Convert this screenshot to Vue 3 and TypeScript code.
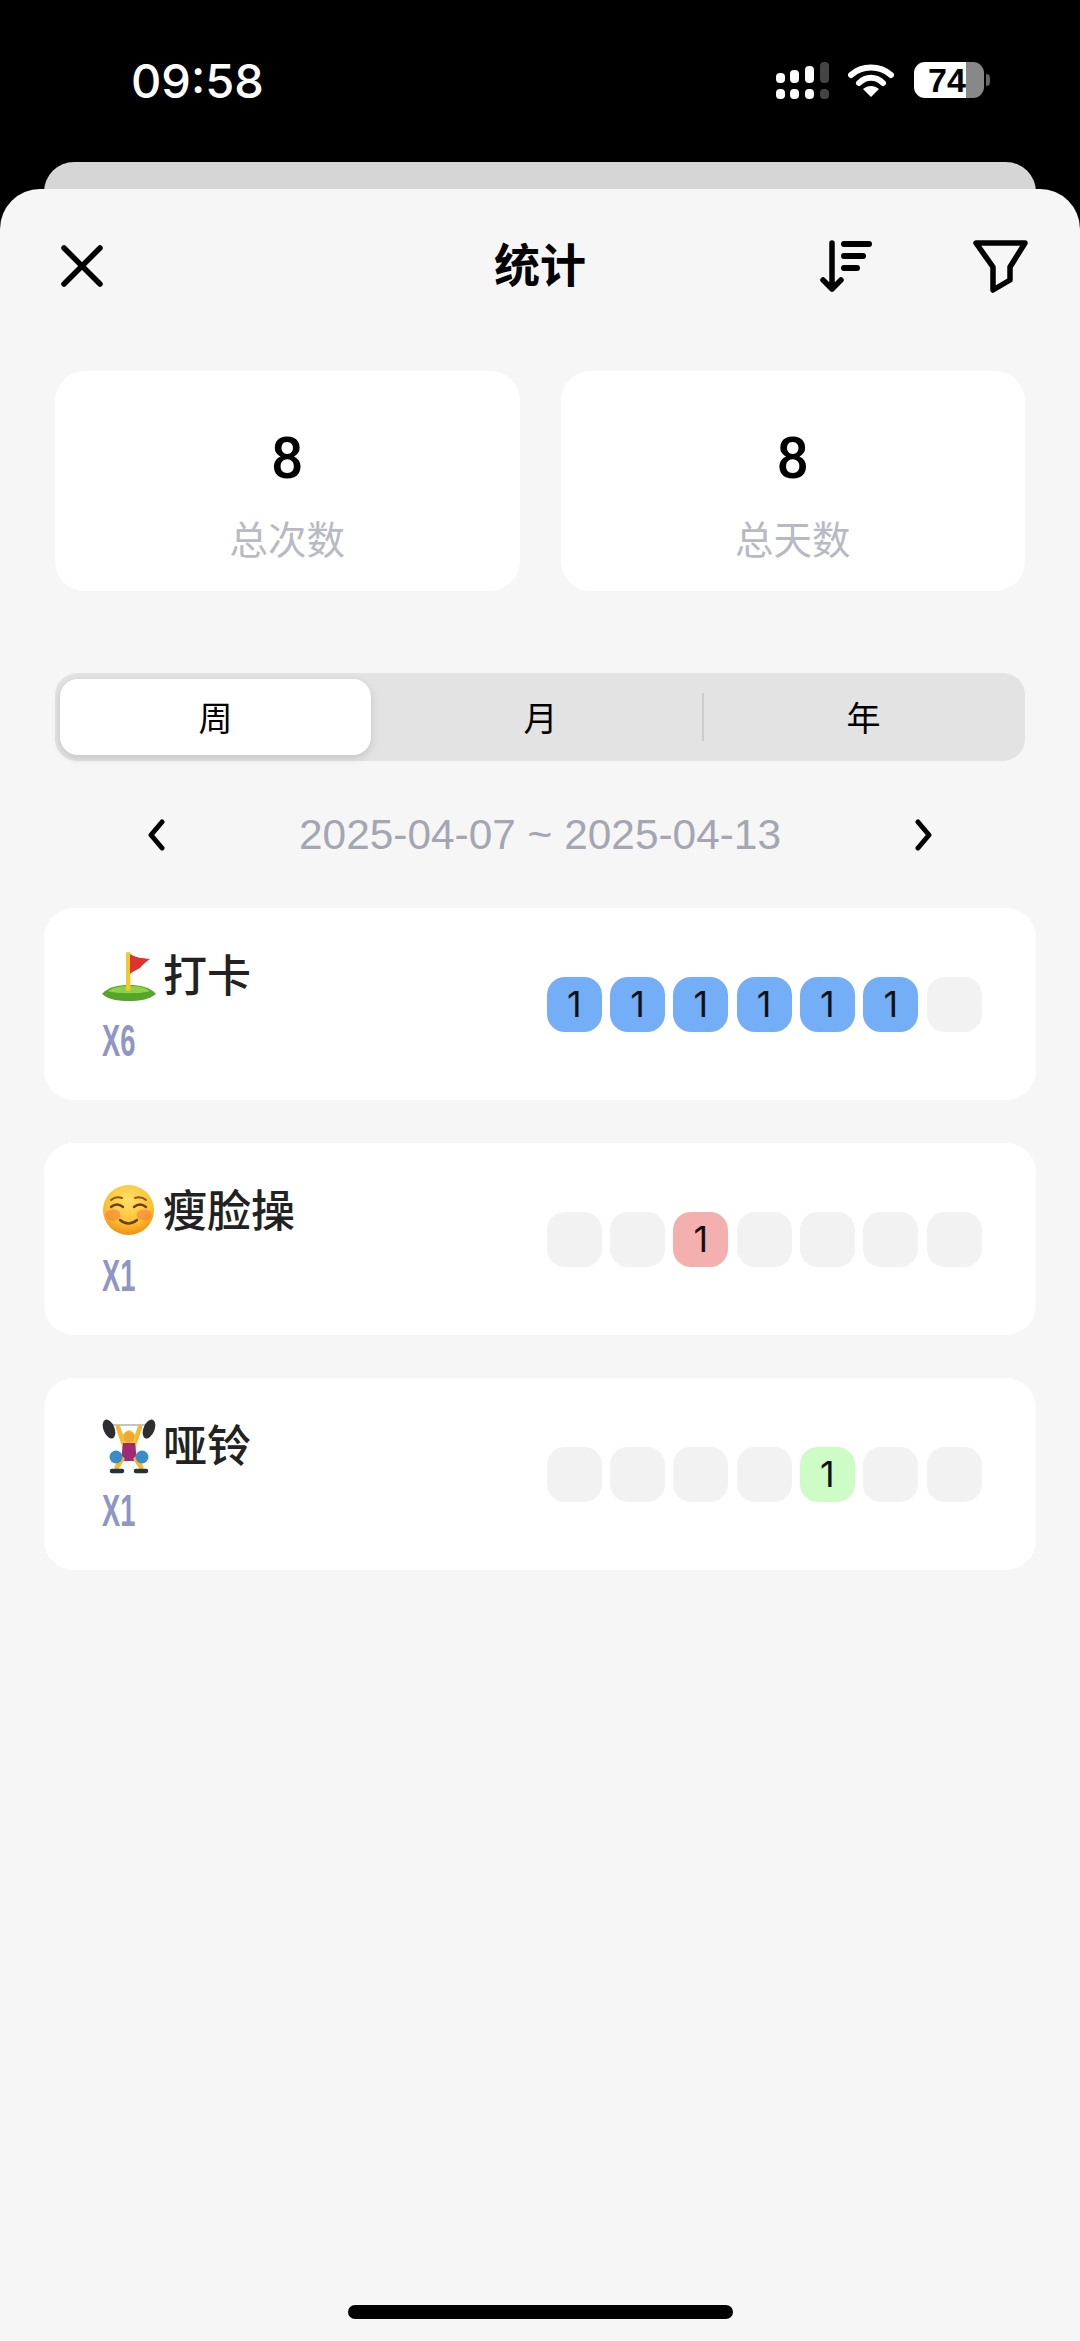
<script setup lang="ts">
interface Row {
  name: string
  count: string
  icon: 'golf' | 'smile' | 'lift'
  color: string
  cells: number[]
}
const rows: Row[] = [
  { name: '打卡', count: 'X6', icon: 'golf', color: '#73aef7', cells: [1, 1, 1, 1, 1, 1, 0] },
  { name: '瘦脸操', count: 'X1', icon: 'smile', color: '#f3b0af', cells: [0, 0, 1, 0, 0, 0, 0] },
  { name: '哑铃', count: 'X1', icon: 'lift', color: '#cdfcc6', cells: [0, 0, 0, 0, 1, 0, 0] }
]
const stats = [
  { value: '8', label: '总次数' },
  { value: '8', label: '总天数' }
]
</script>

<template>
  <div class="screen">
    <header class="status">
      <span class="time">09:58</span>
      <div class="status-icons">
        <svg class="signal" width="54" height="38" viewBox="0 0 54 38">
          <rect x="0" y="11" width="9" height="10" rx="4" fill="#fff" />
          <rect x="14" y="8" width="9" height="13" rx="4" fill="#fff" />
          <rect x="29" y="4" width="9" height="17" rx="4" fill="#fff" />
          <rect x="44" y="0" width="9" height="21" rx="4" fill="#444" />
          <rect x="0" y="27" width="9" height="10" rx="4" fill="#fff" />
          <rect x="14" y="27" width="9" height="10" rx="4" fill="#fff" />
          <rect x="29" y="27" width="9" height="10" rx="4" fill="#fff" />
          <rect x="44" y="27" width="9" height="10" rx="4" fill="#444" />
        </svg>
        <svg class="wifi" width="46" height="35" viewBox="0 0 46 35">
          <path d="M3 12 C14 2 32 2 43 12" fill="none" stroke="#fff" stroke-width="6" stroke-linecap="round" />
          <path d="M11 20 C18 13 28 13 35 20" fill="none" stroke="#fff" stroke-width="6" stroke-linecap="round" />
          <path d="M23 34 L15 26 C20 22 26 22 31 26 Z" fill="#fff" />
        </svg>
        <div class="battery">
          <span class="battery-num">74</span>
        </div>
        <span class="nub"></span>
      </div>
    </header>

    <div class="back-card"></div>

    <main class="sheet">
      <div class="nav">
        <svg class="ic-close" width="46" height="46" viewBox="0 0 46 46">
          <path d="M5 5 L41 41 M41 5 L5 41" fill="none" stroke="#000" stroke-width="5.5" stroke-linecap="round" />
        </svg>
        <h1 class="title">统计</h1>
        <svg class="ic-sort" width="54" height="54" viewBox="0 0 54 54">
          <path d="M14 4 V50 M5 41 L14 50 L23 41" fill="none" stroke="#000" stroke-width="5.5" stroke-linecap="round" stroke-linejoin="round" />
          <path d="M26 5 H51 M26 17 H45 M26 29 H39" fill="none" stroke="#000" stroke-width="6" stroke-linecap="round" />
        </svg>
        <svg class="ic-filter" width="56" height="56" viewBox="0 0 56 56">
          <path d="M4 5 H53 L38 29 V42 L21 52 V29 Z" fill="none" stroke="#000" stroke-width="5.5" stroke-linejoin="round" />
        </svg>
      </div>

      <section class="stats">
        <div v-for="s in stats" :key="s.label" class="stat">
          <div class="stat-value">{{ s.value }}</div>
          <div class="stat-label">{{ s.label }}</div>
        </div>
      </section>

      <div class="segment">
        <div class="seg seg-active">周</div>
        <div class="seg seg-mid">月</div>
        <div class="seg seg-last">年</div>
      </div>

      <div class="range">
        <svg width="20" height="32" viewBox="0 0 20 32">
          <path d="M16 3 L5 16 L16 29" fill="none" stroke="#000" stroke-width="5" stroke-linecap="round" stroke-linejoin="round" />
        </svg>
        <span class="range-text">2025-04-07 ~ 2025-04-13</span>
        <svg width="20" height="32" viewBox="0 0 20 32">
          <path d="M4 3 L15 16 L4 29" fill="none" stroke="#000" stroke-width="5" stroke-linecap="round" stroke-linejoin="round" />
        </svg>
      </div>

      <section class="list">
        <article v-for="r in rows" :key="r.name" class="row">
          <div class="row-left">
            <div class="row-name">
              <svg v-if="r.icon === 'golf'" class="emoji" width="56" height="56" viewBox="0 0 56 56">
                <path d="M2 45 C8 38 18 36 29 36 C40 36 50 38 56 45 C48 51 40 52 29 52 C18 52 9 51 2 45 Z" fill="#55a52a" />
                <path d="M8 42 C14 38 22 37 29 37 C38 37 45 38 50 42 C42 45 16 45 8 42 Z" fill="#8fd04a" />
                <rect x="26" y="3" width="4.5" height="39" rx="1.5" fill="#f4c92f" />
                <path d="M30 5 C36 9 42 9 50 10 C46 13 42 16 40 19 C37 21 33 22 30 25 Z" fill="#e0332f" />
              </svg>
              <svg v-else-if="r.icon === 'smile'" class="emoji" width="56" height="56" viewBox="0 0 56 56">
                <defs>
                  <radialGradient id="face" cx="50%" cy="30%" r="72%">
                    <stop offset="0%" stop-color="#ffe066" />
                    <stop offset="65%" stop-color="#fcc032" />
                    <stop offset="100%" stop-color="#f08a10" />
                  </radialGradient>
                </defs>
                <ellipse cx="28.5" cy="26" rx="25.5" ry="25" fill="url(#face)" />
                <ellipse cx="13" cy="31" rx="7.5" ry="5.5" fill="#f4693e" opacity=".45" />
                <ellipse cx="44" cy="31" rx="7.5" ry="5.5" fill="#f4693e" opacity=".45" />
                <path d="M11 23 Q17 18 23 23 M34 23 Q40 18 46 23" fill="none" stroke="#6b3d12" stroke-width="2.4" stroke-linecap="round" />
                <path d="M11 16 Q16 12 22 14 M35 14 Q41 12 46 16" fill="none" stroke="#8a5416" stroke-width="2" stroke-linecap="round" />
                <path d="M20 36 Q28.5 43 37 36" fill="none" stroke="#6b3d12" stroke-width="2.4" stroke-linecap="round" />
              </svg>
              <svg v-else class="emoji" width="56" height="56" viewBox="0 0 56 56">
                <path d="M11 6 H46" stroke="#c4c4c8" stroke-width="2.2" />
                <ellipse cx="9" cy="10" rx="5.5" ry="10" transform="rotate(-22 9 10)" fill="#2e2e32" />
                <ellipse cx="49" cy="10" rx="5.5" ry="10" transform="rotate(22 49 10)" fill="#2e2e32" />
                <path d="M18 8 L23 23 M40 8 L35 23" stroke="#f5b82e" stroke-width="4.5" stroke-linecap="round" />
                <path d="M22 30 Q20 13 29 11 Q38 13 36 30 Z" fill="#f4c431" />
                <circle cx="29" cy="18" r="5.5" fill="#f0a835" />
                <path d="M23 24 H35 L37 42 H21 Z" fill="#a02a73" />
                <path d="M22 40 L17 48 M36 40 L41 48" stroke="#f5b82e" stroke-width="5" stroke-linecap="round" />
                <circle cx="16" cy="38" r="6.5" fill="#3a8dc9" />
                <circle cx="42" cy="38" r="6.5" fill="#3a8dc9" />
                <path d="M12 52 H22 M36 52 H46" stroke="#24323c" stroke-width="4.5" stroke-linecap="round" />
              </svg>
              <span class="row-title">{{ r.name }}</span>
            </div>
            <div class="row-count">{{ r.count }}</div>
          </div>
          <div class="cells">
            <div
              v-for="(c, i) in r.cells"
              :key="i"
              class="cell"
              :style="c ? { background: r.color } : undefined"
            >{{ c ? c : '' }}</div>
          </div>
        </article>
      </section>

      <div class="home"></div>
    </main>
  </div>
</template>

<style>
html, body { background: #000; }
</style>

<style scoped>
.screen {
  width: 1080px;
  height: 2341px;
  background: #000;
  display: flex;
  flex-direction: column;
  overflow: hidden;
  font-family: "Liberation Sans", "Noto Sans CJK SC", sans-serif;
}
.status {
  height: 162px;
  flex: none;
  display: flex;
  justify-content: space-between;
  padding: 55px 90px 0 131px;
  box-sizing: border-box;
  color: #fff;
}
.time {
  font-family: Inter, "Liberation Sans", sans-serif;
  font-size: 47px;
  font-weight: 500;
  line-height: 52px;
}
.status-icons {
  display: flex;
  align-items: flex-start;
  padding-top: 7px;
}
.signal { margin-right: 18px; }
.wifi { margin-top: 1px; margin-right: 20px; }
.battery {
  width: 70px;
  height: 36px;
  border-radius: 11px;
  background: linear-gradient(90deg, #fff 0, #fff 52px, #888 52px);
  display: flex;
  align-items: center;
  padding-left: 14px;
  box-sizing: border-box;
}
.battery-num {
  color: #000;
  font-size: 34px;
  font-weight: 700;
  line-height: 36px;
}
.nub {
  width: 4px;
  height: 12px;
  margin: 12px 0 0 2px;
  background: #666;
  border-radius: 0 4px 4px 0;
}
.back-card {
  flex: none;
  height: 60px;
  margin: 0 44px -33px;
  background: #d6d6d6;
  border-radius: 30px 30px 0 0;
}
.sheet {
  position: relative;
  flex: 1;
  background: #f6f6f6;
  border-radius: 40px 40px 0 0;
  padding: 0 44px;
  box-sizing: border-box;
  display: flex;
  flex-direction: column;
}
.nav {
  height: 154px;
  flex: none;
  display: flex;
  align-items: center;
  position: relative;
}
.ic-close { margin-left: 15px; }
.title {
  margin: 0;
  position: absolute;
  left: 0;
  right: 0;
  text-align: center;
  font-size: 46px;
  line-height: 60px;
  font-weight: 700;
  color: #000;
  pointer-events: none;
}
.ic-sort { margin-left: auto; margin-right: 100px; }
.ic-filter { margin-right: 8px; }
.stats {
  display: flex;
  gap: 41px;
  padding: 0 11px;
  margin-top: 28px;
}
.stat {
  flex: 1;
  height: 220px;
  background: #fff;
  border-radius: 30px;
  text-align: center;
  padding-top: 58px;
  box-sizing: border-box;
}
.stat-value {
  font-family: Roboto, "Liberation Sans", sans-serif;
  font-size: 57px;
  font-weight: 500;
  line-height: 60px;
  color: #000;
}
.stat-label {
  margin-top: 27px;
  font-size: 38.5px;
  line-height: 50px;
  color: #b8bac3;
}
.segment {
  margin: 82px 11px 0;
  height: 88px;
  background: #e3e3e3;
  border-radius: 22px;
  display: flex;
  padding: 6px 0 6px 5px;
  box-sizing: border-box;
}
.seg {
  display: flex;
  align-items: center;
  justify-content: center;
  font-size: 34px;
  color: #000;
  position: relative;
  padding-bottom: 2px;
  box-sizing: border-box;
}
.seg-active {
  flex: none;
  width: 311px;
  background: #fff;
  border-radius: 18px;
  box-shadow: 0 3px 8px rgba(0, 0, 0, .14);
}
.seg-mid {
  flex: none;
  width: 331px;
  padding-left: 8px;
}
.seg-last { flex: 1; }
.seg-last::before {
  content: "";
  position: absolute;
  left: 0;
  top: 14px;
  bottom: 14px;
  width: 2px;
  background: #cdcdcd;
}
.range {
  margin-top: 54px;
  height: 40px;
  display: flex;
  align-items: center;
  justify-content: space-between;
  padding: 0 102px;
}
.range-text {
  font-size: 42.4px;
  line-height: 42px;
  color: #a4a6b2;
}
.list {
  margin-top: 53px;
  display: flex;
  flex-direction: column;
  gap: 43px;
}
.row {
  height: 192px;
  background: #fff;
  border-radius: 30px;
  display: flex;
  align-items: flex-start;
  justify-content: space-between;
  padding: 0 54.5px 0 58px;
  box-sizing: border-box;
}
.row-left { padding-top: 41px; margin-left: -2px; }
.row-name {
  display: flex;
  align-items: center;
  height: 56px;
}
.emoji { flex: none; }
.row-title {
  margin-left: 7px;
  font-size: 44px;
  font-weight: 500;
  line-height: 56px;
  color: #222;
}
.row-count {
  margin-top: 14px;
  margin-left: 2px;
  font-size: 44px;
  font-weight: 700;
  line-height: 44px;
  color: #8f96c4;
  transform: scaleX(.62);
  transform-origin: left center;
}
.cells {
  display: flex;
  gap: 8.3px;
  padding-top: 69px;
}
.cell {
  width: 55px;
  height: 55px;
  border-radius: 18px;
  background: #f2f2f2;
  display: flex;
  align-items: center;
  justify-content: center;
  font-family: Inter, "Liberation Sans", sans-serif;
  font-size: 36px;
  line-height: 55px;
  color: #111;
}
.home {
  position: absolute;
  left: 348px;
  bottom: 22px;
  width: 385px;
  height: 14px;
  border-radius: 7px;
  background: #000;
}
</style>
